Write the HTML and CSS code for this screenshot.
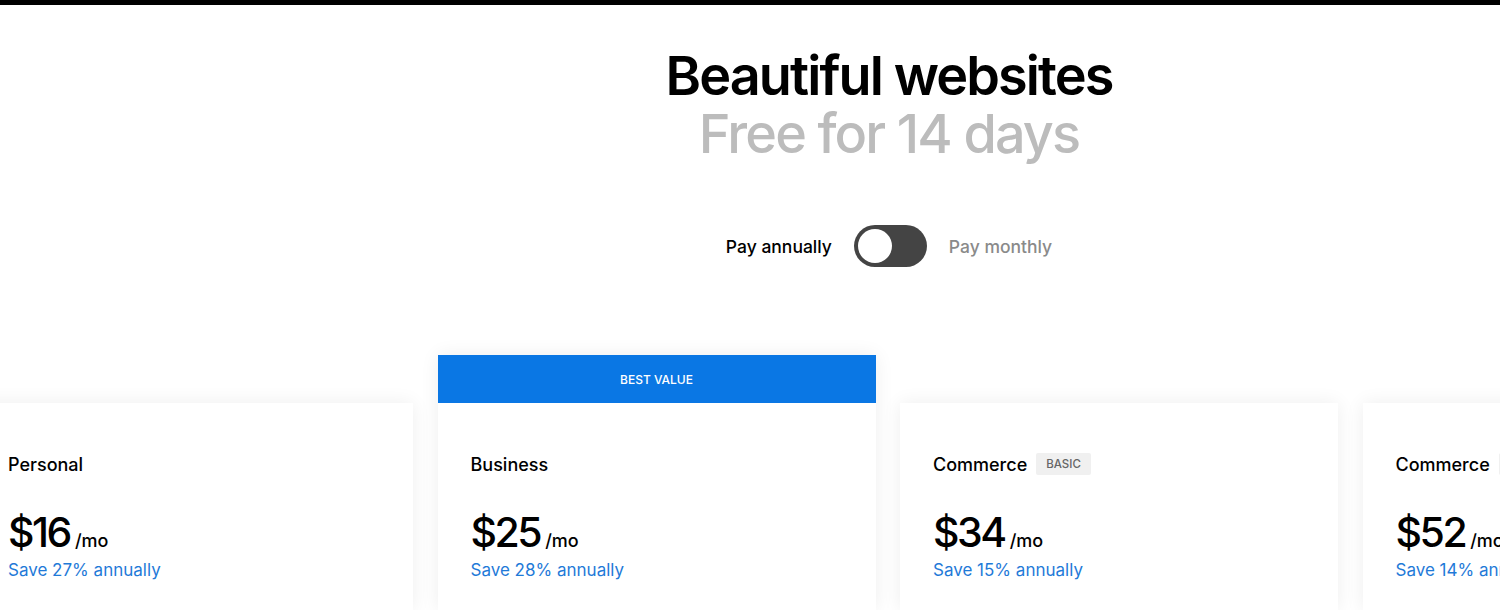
FILE: index.html
```html
<!doctype html>
<html lang="en">
<head>
	<meta charset="UTF-8">
	<title>Pricing</title>
	<link rel="stylesheet" href="styles.css">
</head>
<body>
	<div class="topbar"></div>

	<header class="hero">
		<h1 class="title">Beautiful websites</h1>
		<h2 class="subtitle">Free for 14 days</h2>
	</header>

	<div class="billing">
		<span class="billing-label active">Pay annually</span>
		<span class="switch"><span class="knob"></span></span>
		<span class="billing-label">Pay monthly</span>
	</div>

	<div class="plans">
		<div class="plan">
			<div class="plan-body">
				<div class="plan-name">Personal</div>
				<div class="price"><span class="amount">$16</span> <span class="per">/mo</span></div>
				<div class="save">Save 27% annually</div>
			</div>
		</div>
		<div class="plan featured">
			<div class="ribbon">BEST VALUE</div>
			<div class="plan-body">
				<div class="plan-name">Business</div>
				<div class="price"><span class="amount">$25</span> <span class="per">/mo</span></div>
				<div class="save">Save 28% annually</div>
			</div>
		</div>
		<div class="plan">
			<div class="plan-body">
				<div class="plan-name">Commerce <span class="tag">BASIC</span></div>
				<div class="price"><span class="amount">$34</span> <span class="per">/mo</span></div>
				<div class="save">Save 15% annually</div>
			</div>
		</div>
		<div class="plan">
			<div class="plan-body">
				<div class="plan-name">Commerce <span class="tag">ADVANCED</span></div>
				<div class="price"><span class="amount">$52</span> <span class="per">/mo</span></div>
				<div class="save">Save 14% annually</div>
			</div>
		</div>
	</div>
</body>
</html>
```

FILE: styles.css
```css
html, body {
	margin: 0;
	padding: 0;
	background: #fff;
	color: #000;
	font-family: Inter, "Liberation Sans", sans-serif;
	overflow: hidden;
}

.topbar {
	height: 5px;
	background: #000;
}

.hero {
	margin-left: 278px;
	padding-top: 42px;
	text-align: center;
}
.title, .subtitle {
	margin: 0;
	font-size: 54px;
	line-height: 58px;
	letter-spacing: -0.035em;
}
.title {
	font-weight: 600;
}
.subtitle {
	font-weight: 500;
	color: #bcbcbc;
}

.billing {
	margin-left: 278px;
	margin-top: 62px;
	display: flex;
	align-items: center;
	justify-content: center;
	gap: 22px;
}
.billing-label {
	font-size: 17.5px;
	font-weight: 500;
	color: #8a8a8a;
}
.billing-label.active {
	color: #000;
}
.switch {
	width: 73px;
	height: 42px;
	border-radius: 21px;
	background: #444;
	display: flex;
	align-items: center;
	padding-left: 4px;
	box-sizing: border-box;
}
.knob {
	width: 34px;
	height: 34px;
	border-radius: 50%;
	background: #fff;
}

.plans {
	display: flex;
	align-items: flex-end;
	gap: 24.5px;
	margin-top: 88px;
	margin-left: -25px;
}
.plan {
	flex: 0 0 438px;
	background: #fff;
	box-shadow: 0 0 18px rgba(0, 0, 0, 0.07);
}
.ribbon {
	height: 48px;
	background: #0a77e4;
	color: #fff;
	font-size: 12px;
	font-weight: 500;
	display: flex;
	align-items: center;
	justify-content: center;
}
.plan-body {
	height: 207px;
	padding: 50px 33px 0;
	box-sizing: border-box;
}
.plan-name {
	font-size: 18px;
	font-weight: 500;
	display: flex;
	align-items: center;
	gap: 9px;
	height: 22px;
}
.tag {
	font-size: 11.5px;
	color: #666;
	background: #f0f0f0;
	border-radius: 2px;
	padding: 4px 10px;
}
.price {
	margin-top: 33px;
	display: flex;
	align-items: baseline;
	gap: 5px;
}
.amount {
	font-size: 41px;
	font-weight: 500;
	letter-spacing: -0.06em;
	line-height: 48px;
}
.per {
	font-size: 18px;
	font-weight: 500;
}
.save {
	font-size: 17px;
	color: #1f7ad8;
	margin-top: 4px;
}
```
